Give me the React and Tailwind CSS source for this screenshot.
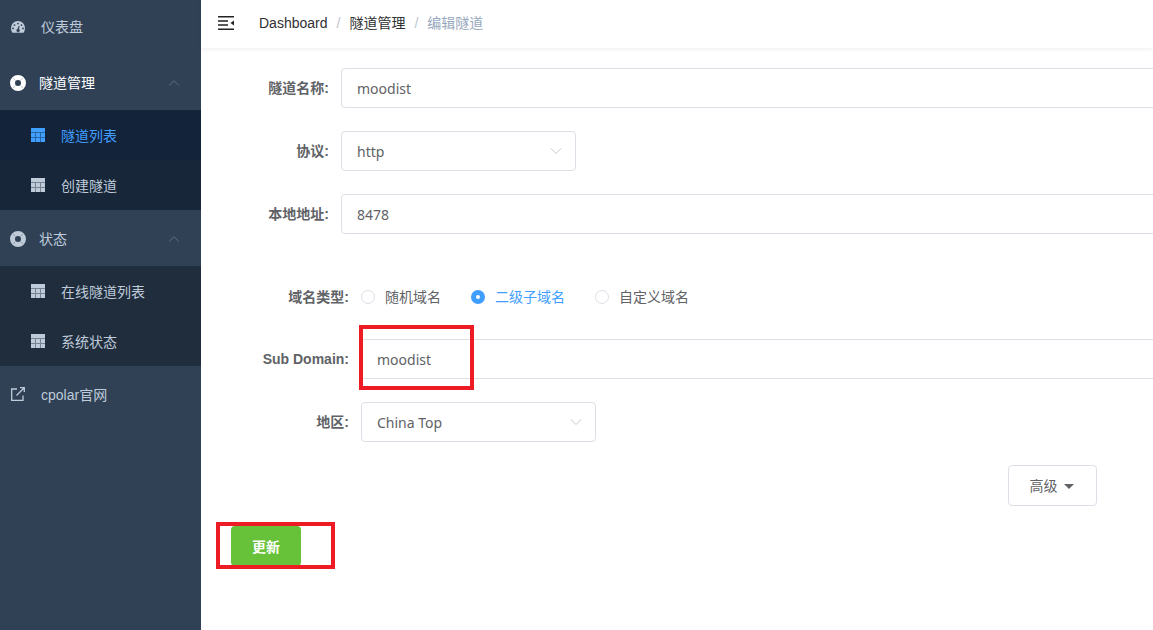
import { ChevronDown, ChevronUp } from 'lucide-react';

const cjk = "font-['Liberation_Sans','Noto_Sans_CJK_SC',sans-serif]";
const latin = "font-['Noto_Sans','Noto_Sans_CJK_SC',sans-serif]";

function GaugeIcon() {
  return (
    <svg width="14" height="12" viewBox="0 0 14 12" className="shrink-0">
      <path fill="#bfcbd9" fillRule="evenodd" d="M7 0a7 7 0 0 1 7 7c0 1.6-.4 3-1.1 4.200-.2.400-.5.600-.9.600H2c-.4 0-.7-.2-.9-.6A7.900 7.900 0 0 1 0 7a7 7 0 0 1 7-7Zm0 1.700a.9.900 0 1 0 0 1.800.9.900 0 0 0 0-1.800ZM3.500 3.200a.9.900 0 1 0 0 1.800.9.900 0 0 0 0-1.800Zm7 0a.9.900 0 1 0 0 1.800.9.900 0 0 0 0-1.800ZM2 6.500a.9.900 0 1 0 0 1.800.9.900 0 0 0 0-1.800Zm10 0a.9.900 0 1 0 0 1.800.9.900 0 0 0 0-1.800ZM7.800 4.800 6.500 8a1.600 1.600 0 1 0 1.500.200l.6-3.200Z" />
    </svg>
  );
}

function RingIcon({ color }) {
  return (
    <svg width="16" height="16" viewBox="0 0 16 16" className="shrink-0">
      <circle cx="8" cy="8" r="5.500" fill="none" stroke={color} strokeWidth="5" />
      <path d="M3 3l2.500 2.500M13 3l-2.500 2.500M3 13l2.500-2.500M13 13l-2.500-2.500" stroke="#304156" strokeWidth="1" opacity="0.3" />
    </svg>
  );
}

function TableIcon({ color, line }) {
  return (
    <svg width="14" height="14" viewBox="0 0 14 14" className="shrink-0">
      <rect width="14" height="14" fill={color} />
      <path d="M0 4.500h14M0 9.500h14M4.500 4.500V14M9.500 4.500V14" stroke={line} strokeWidth="1" opacity="0.45" />
    </svg>
  );
}

function LinkIcon() {
  return (
    <svg width="14" height="14" viewBox="0 0 14 14" fill="none" stroke="#bfcbd9" strokeWidth="1.300" className="shrink-0">
      <path d="M6 2H.700v11.300H12V8.500" />
      <path d="M5.500 8.500 13 1M9 .700h4.300V5" />
    </svg>
  );
}

function MenuTitle({ icon, children, active, low }) {
  return (
    <div className={`flex h-14 items-center justify-between pl-[10px] pr-[18px] text-sm ${low ? 'pt-0.5' : ''} ${active ? 'text-white' : 'text-[#bfcbd9]'}`}>
      <div className="flex items-center gap-[13px]">
        {icon}
        <span>{children}</span>
      </div>
      <ChevronUp size={18} strokeWidth={1.100} className="text-[#68778a]" />
    </div>
  );
}

function SubItem({ children, active, bg }) {
  return (
    <div className={`flex h-[50px] items-center gap-4 pl-[31px] text-sm ${bg} ${active ? 'text-[#409eff]' : 'text-[#bfcbd9]'}`}>
      <TableIcon color={active ? '#409eff' : '#bfcbd9'} line={active ? '#12233a' : '#1f2d3d'} />
      <span className="pt-0.5">{children}</span>
    </div>
  );
}

function Sidebar() {
  return (
    <aside className={`${cjk} w-[201px] shrink-0 bg-[#304156]`}>
      <div className="-mt-px flex h-14 items-center gap-4 pl-[11px] text-sm text-[#bfcbd9]">
        <GaugeIcon />
        <span>仪表盘</span>
      </div>
      <MenuTitle icon={<RingIcon color="#ffffff" />} active>隧道管理</MenuTitle>
      <div className="-mt-px">
        <SubItem active bg="bg-[#12233a]">隧道列表</SubItem>
        <SubItem bg="bg-[#18263a]">创建隧道</SubItem>
      </div>
      <MenuTitle icon={<RingIcon color="#bfcbd9" />} low>状态</MenuTitle>
      <SubItem bg="bg-[#1f2d3d]">在线隧道列表</SubItem>
      <SubItem bg="bg-[#1f2d3d]">系统状态</SubItem>
      <div className="flex h-14 items-center gap-4 pl-[11px] text-sm text-[#bfcbd9]">
        <LinkIcon />
        <span className="pt-0.5">cpolar官网</span>
      </div>
    </aside>
  );
}

function Header() {
  return (
    <header className={`${cjk} relative z-10 flex h-12 items-center bg-white pl-[17px] text-sm shadow-[0_1px_4px_rgba(0,21,41,0.08)]`}>
      <svg width="16" height="14" viewBox="0 0 16 14" className="mb-[3px] shrink-0">
        <path d="M0 .700h16M0 13.300h16M0 5h10M0 9h10" stroke="#222222" strokeWidth="1.400" />
        <path d="M16 4.500v5L12.500 7z" fill="#222222" />
      </svg>
      <div className="mb-[2px] ml-[25px] flex items-center">
        <span className="text-[#303133]">Dashboard</span>
        <span className="mx-[9px] text-[#c0c4cc]">/</span>
        <span className="text-[#303133]">隧道管理</span>
        <span className="mx-[9px] text-[#c0c4cc]">/</span>
        <span className="text-[#97a8be]">编辑隧道</span>
      </div>
    </header>
  );
}

function Label({ width, children }) {
  return (
    <label className={`${cjk} ${width} shrink-0 pr-3 text-right text-sm font-bold text-[#606266]`}>{children}</label>
  );
}

function TextBox({ value, width }) {
  return (
    <div className={`${latin} ${width} flex h-10 shrink-0 items-center rounded border border-[#dcdfe6] pl-[15px] text-sm text-[#606266]`}>
      <span className="pt-0.5">{value}</span>
    </div>
  );
}

function SelectBox({ value }) {
  return (
    <div className={`${latin} flex h-10 w-[235px] shrink-0 items-center justify-between rounded border border-[#dcdfe6] pl-[15px] pr-[9px] text-sm text-[#606266]`}>
      <span className="pt-0.5">{value}</span>
      <ChevronDown size={20} strokeWidth={0.900} className="text-[#b4b8c0]" />
    </div>
  );
}

function Radio({ label, checked }) {
  return (
    <div className={`${cjk} flex items-center gap-[10px] text-sm ${checked ? 'text-[#409eff]' : 'text-[#606266]'}`}>
      {checked ? (
        <span className="flex h-[14px] w-[14px] items-center justify-center rounded-full bg-[#409eff]">
          <span className="h-1 w-1 rounded-full bg-white" />
        </span>
      ) : (
        <span className="h-[14px] w-[14px] rounded-full border border-[#dcdfe6] bg-white" />
      )}
      <span>{label}</span>
    </div>
  );
}

export default function App() {
  return (
    <div className="flex h-[630px] w-[1153px] overflow-hidden bg-white">
      <Sidebar />
      <div className="min-w-0 flex-1">
        <Header />
        <main className="pt-5">
          <div className="flex items-center">
            <Label width="w-[140px]">隧道名称:</Label>
            <TextBox value="moodist" width="w-[830px]" />
          </div>
          <div className="mt-[23px] flex items-center">
            <Label width="w-[140px]">协议:</Label>
            <SelectBox value="http" />
          </div>
          <div className="mt-[23px] flex items-center">
            <Label width="w-[140px]">本地地址:</Label>
            <TextBox value="8478" width="w-[830px]" />
          </div>
          <div className="mt-[43px] flex h-10 items-center">
            <Label width="w-[160px]">域名类型:</Label>
            <div className="flex items-center gap-[30px]">
              <Radio label="随机域名" />
              <Radio label="二级子域名" checked />
              <Radio label="自定义域名" />
            </div>
          </div>
          <div className="mt-[22px] flex items-center">
            <Label width="w-[160px]">Sub Domain:</Label>
            <div className="relative">
              <TextBox value="moodist" width="w-[810px]" />
              <div className="absolute -left-[2px] -top-[14px] h-[65px] w-[115px] border-4 border-[#ed1c24]" />
            </div>
          </div>
          <div className="mt-[23px] flex items-center">
            <Label width="w-[160px]">地区:</Label>
            <SelectBox value="China Top" />
          </div>
          <div className="mt-[23px] flex justify-end pr-14">
            <button className={`${cjk} flex h-[41px] w-[89px] items-center justify-center gap-[6px] rounded border border-[#dcdfe6] bg-white pr-[2px] text-sm text-[#606266]`}>
              高级
              <span className="mt-px h-0 w-0 border-x-[5px] border-t-[5px] border-x-transparent border-t-[#606266]" />
            </button>
          </div>
          <div className="relative ml-[30px] mt-5 w-[70px]">
            <button className={`${cjk} h-10 w-[70px] rounded bg-[#67c23a] pt-0.5 text-sm font-bold text-white`}>更新</button>
            <div className="absolute -left-[15px] -top-1 h-[47px] w-[119px] border-4 border-[#ed1c24]" />
          </div>
        </main>
      </div>
    </div>
  );
}
